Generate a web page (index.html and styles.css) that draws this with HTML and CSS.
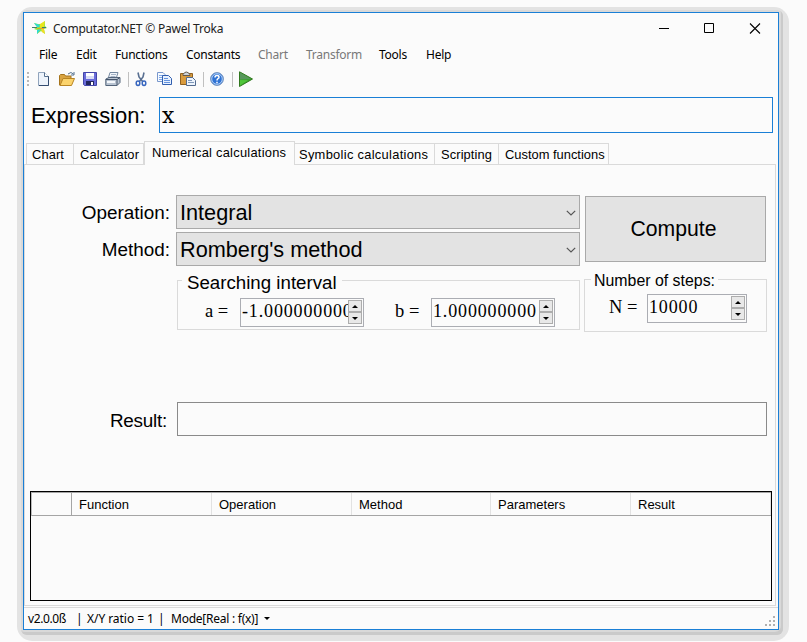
FILE: index.html
```html
<!DOCTYPE html>
<html lang="en">
<head>
<meta charset="utf-8">
<title>Computator.NET</title>
<link rel="stylesheet" href="styles.css">
</head>
<body>
<div class="window">
  <header class="titlebar">
    <svg class="app-icon" width="16" height="16" viewBox="0 0 16 16"><path d="M2 3 6 4 9 4 13 1 13 6 15 8 12 9 13 14 9 11 5 14 5 10 2 9 5 7Z" fill="#8be84a"/><path d="M8 4 13 1 12 7 8 8Z" fill="#e9e51c"/><path d="M2 3 8 5 7 7 5 7ZM5 10 9 9 5 14Z" fill="#2fd9d4"/><path d="M9 9 12 9 13 14 10 12Z" fill="#f1dc24"/><path d="M0 7.5h5M10 7.5h4" stroke="#407c70"/><path d="M5 8.5h7" stroke="#e9a425"/></svg>
    <h1 class="title">Computator.NET © Pawel Troka</h1>
    <svg class="caption" width="103" height="11" viewBox="0 0 103 11"><path d="M0 5.5h10M45.500.500h9v9h-9z" fill="none" stroke="#000"/><path d="M91 .5l10 10M101 .5l-10 10" stroke="#000" stroke-width="1.1"/></svg>
  </header>
  <nav class="menu">
    <span class="m-file">File</span><span class="m-edit">Edit</span><span class="m-func">Functions</span><span class="m-const">Constants</span><span class="m-chart off">Chart</span><span class="m-trans off">Transform</span><span class="m-tools">Tools</span><span>Help</span>
  </nav>
  <div class="toolbar">
    <svg class="grip" width="2" height="14" viewBox="0 0 2 14"><path d="M1 0v14" stroke="#b8b8b8" stroke-width="2" stroke-dasharray="2 2"/></svg>
    <svg class="ic" viewBox="0 0 16 16"><path d="M3.500 1.500h6l4 4v9h-10z" fill="#edf3fb" stroke="#91a4bc"/><path d="M13.500 5v9.500H4" fill="none" stroke="#344c70"/><path d="M9.500 1.500v4h4" fill="#fff" stroke="#56708f"/></svg>
    <svg class="ic" viewBox="0 0 16 16"><path d="M.5 14V4.500l1-1h4l1 1.500h5.500V14z" fill="#d9a441" stroke="#a6741c"/><path d="M1 14.500 4 7.500h11.500l-3 7z" fill="#fbd36c" stroke="#b98524"/><path d="M9 3q3-3 5.500 0M12 4h3V1" fill="none" stroke="#52708e"/></svg>
    <svg class="ic" viewBox="0 0 16 16"><path d="M1.500 1.500h13v13h-12l-1-1z" fill="#6a6cda" stroke="#4345a8"/><path d="M4 2h8v6H4z" fill="#d9ddf6"/><path d="M4 2h8v3H4z" fill="#fff"/><path d="M4 10h8v4H4z" fill="#23275e"/><path d="M9 11h2v3H9z" fill="#fff"/></svg>
    <svg class="ic" viewBox="0 0 16 16"><path d="M5 1.500h8L11 8H3z" fill="#f3f7fb" stroke="#7488a0"/><path d="M.8 8 4 6.500h11v5l-3 3H.8z" fill="#b9c4d2" stroke="#53647a"/><path d="M1 8.500h11v6M12 8.500l3-2" fill="none" stroke="#46556b"/><path d="M2 10h8v2H2z" fill="#f5f8fc"/><path d="M6 3.500h5M5.500 5.500h5" stroke="#a7b5c8"/></svg>
    <i class="sep s1"></i>
    <svg class="ic" viewBox="0 0 16 16"><path d="M5 1.500 6 6l4 5M11 1.500 10 6l-4 5" fill="none" stroke="#586f91" stroke-width="1.6"/><ellipse cx="5" cy="12.200" rx="1.800" ry="2.200" fill="none" stroke="#3766bf" stroke-width="1.500"/><ellipse cx="11" cy="12.200" rx="1.800" ry="2.200" fill="none" stroke="#3766bf" stroke-width="1.500"/></svg>
    <svg class="ic" viewBox="0 0 16 16"><path d="M1.500 1.500H7l2 2v7H1.500z" fill="#f5faff" stroke="#7897cd"/><path d="M3 4.500h4M3 6.500h4M3 8.500h4" stroke="#7fa7e8"/><path d="M6.500 4.500h6l3 3v6h-9z" fill="#e7f1ff" stroke="#315faf"/><path d="M8 7.500h4M8 9.500h6M8 11.500h6" stroke="#6594df"/></svg>
    <svg class="ic ic-paste" viewBox="0 0 16 16"><path d="M.5 2.500h12v11H.5z" fill="#d99b3d" stroke="#8f6122"/><path d="M3 3.500q3-5 7 0v1H3z" fill="#ccd3dc" stroke="#65594a"/><path d="M6.500 6.500h6l3 3v5h-9z" fill="#edf4fd" stroke="#536b8e"/><path d="M8 9.500h4M8 11.500h6" stroke="#7f98ba"/></svg>
    <i class="sep s2"></i>
    <svg class="ic" viewBox="0 0 16 16"><circle cx="8" cy="8" r="6.400" fill="#3073d4" stroke="#7794bd"/><circle cx="8" cy="8" r="5.300" fill="none" stroke="#c2dcfb" stroke-width=".9"/><path d="M6 6.500q0-2 2-2t2 1.700q0 1-1 1.500T8 9.500M8 10.700v1.500" fill="none" stroke="#fff" stroke-width="1.500"/></svg>
    <i class="sep s3"></i>
    <svg class="ic" viewBox="0 0 16 16"><path d="M1.500.800 14.500 8 1.500 15.500z" fill="#39a52c" stroke="#31771f"/><path d="M2 1.500 13 8 2 8.500z" fill="#58975c"/><path d="M2 14.500V9l8 .2z" fill="#4fc53a"/></svg>
  </div>
  <div class="expr">
    <span class="expr-label">Expression:</span>
    <div class="expr-box">x</div>
  </div>
  <div class="tabs">
    <span class="tab t1">Chart</span><span class="tab t2">Calculator</span><span class="tab t3 on">Numerical calculations</span><span class="tab t4">Symbolic calculations</span><span class="tab t5">Scripting</span><span class="tab t6">Custom functions</span>
  </div>
  <main class="panel">
    <section class="top">
      <div class="left">
        <div class="field"><span class="label l-op">Operation:</span><div class="combo"><span class="c1">Integral</span><svg width="10" height="6" viewBox="0 0 10 6"><path d="M.8.8 5 5 9.200.800" fill="none" stroke="#555" stroke-width="1.200"/></svg></div></div>
        <div class="field"><span class="label l-me">Method:</span><div class="combo"><span class="c2">Romberg's method</span><svg width="10" height="6" viewBox="0 0 10 6"><path d="M.8.8 5 5 9.200.800" fill="none" stroke="#555" stroke-width="1.200"/></svg></div></div>
        <div class="group interval">
          <span class="legend lg1">Searching interval</span>
          <div class="row">
            <span class="var v-a">a =</span>
            <div class="num"><span class="val">-1.0000000000</span><div class="spin"><i><b class="up"></b></i><i><b class="down"></b></i></div></div>
            <span class="var v-b">b =</span>
            <div class="num"><span class="val">1.000000000</span><div class="spin"><i><b class="up"></b></i><i><b class="down"></b></i></div></div>
          </div>
        </div>
      </div>
      <div class="right">
        <div class="compute">Compute</div>
        <div class="group steps">
          <span class="legend lg2">Number of steps:</span>
          <div class="row">
            <span class="var v-n">N =</span>
            <div class="num num-n"><span class="val">10000</span><div class="spin"><i><b class="up"></b></i><i><b class="down"></b></i></div></div>
          </div>
        </div>
      </div>
    </section>
    <div class="result"><span class="label l-re">Result:</span><div class="result-box"></div></div>
    <div class="table"><div class="thead"><span class="rowhead"></span><span>Function</span><span>Operation</span><span>Method</span><span>Parameters</span><span>Result</span></div></div>
  </main>
  <footer class="status">
    <span class="st1">v2.0.0ß</span><span class="bar">|</span><span class="st2">X/Y ratio = 1</span><span class="bar">|</span><span class="st3">Mode[Real : f(x)]</span><b class="down"></b>
    <svg class="size-grip" width="10" height="10" viewBox="0 0 10 10"><path d="M8 0h2v2H8zM4 4h2v2H4zM8 4h2v2H8zM0 8h2v2H0zM4 8h2v2H4zM8 8h2v2H8z" fill="#b0b0b0"/></svg>
  </footer>
</div>
</body>
</html>
```
FILE: styles.css
```css
* { box-sizing: border-box; }
body { margin: 0; width: 807px; height: 642px; overflow: hidden; padding: 12px 0 0 23px; background: #fbfbfb; color: #000; font-family: "Liberation Sans", Arial, sans-serif; }
span { white-space: nowrap; }
svg { display: block; flex: none; }
.window { position: relative; width: 756px; height: 618px; border: 1px solid #1a7fd6; background: #fbfbfb; display: flex; flex-direction: column; }
/* stepped drop shadow */
.window::before { content: ""; position: absolute; z-index: -1; left: -7px; top: -6px; right: -11px; bottom: -12px; border-radius: 15px; background: #e3e3e3; }
.window::after { content: ""; position: absolute; z-index: -1; left: -3px; top: -3px; right: -5px; bottom: -6px; border-radius: 6px; background: #d9d9d9; box-shadow: inset -2px -3px 0 #cacaca; }
.titlebar { height: 30px; display: flex; align-items: center; padding: 0 16px 0 8px; }
.title { margin: 1px 0 0 5px; font: 400 12px/16px "Noto Sans", sans-serif; letter-spacing: -.21px; color: #222; }
.caption { margin-left: auto; }
.menu { height: 24px; display: flex; padding-left: 15px; font: 12px/24px "Noto Sans", sans-serif; letter-spacing: -.25px; }
.off { color: #787878; }
.m-file { width: 37px; } .m-edit { width: 39px; } .m-func { width: 71px; } .m-const { width: 72px; } .m-chart { width: 48px; } .m-trans { width: 73px; } .m-tools { width: 47px; }
.toolbar { height: 24px; display: flex; align-items: center; padding-left: 3px; }
.grip { margin-right: 6px; }
.ic { width: 16px; height: 16px; margin-right: 7px; }
.grip + .ic { margin-right: 8px; }
.sep { width: 1px; height: 15px; background: #c0c0c0; }
.s1 { margin-right: 4px; }
.ic-paste { margin-left: 1px; }
.s2, .s3 { margin-right: 5px; }
.expr { height: 36px; margin-top: 6px; display: flex; padding-left: 7px; }
.expr-label { width: 128px; font-size: 22px; line-height: 37px; letter-spacing: -.05px; }
.expr-box { width: 614px; border: 1px solid #1a7fd6; font: 22px/35px "DejaVu Serif", serif; padding-left: 2px; }
.tabs { height: 23px; margin-top: 8px; padding-left: 2px; display: flex; align-items: flex-end; font-size: 12.9px; }
.tab { height: 21px; border: 1px solid #dadada; border-left: 0; border-bottom: 0; line-height: 21px; }
.t1 { width: 48px; border-left: 1px solid #dadada; padding-left: 5px; letter-spacing: .1px; }
.t2 { width: 70px; padding-left: 6px; letter-spacing: .1px; }
.t3 { width: 151px; padding-left: 7px; letter-spacing: .24px; }
.t4 { width: 140px; padding-left: 4px; letter-spacing: .29px; }
.t5 { width: 64px; padding-left: 6px; letter-spacing: .1px; }
.t6 { width: 110px; padding-left: 6px; }
.tab.on { height: 24px; border-left: 1px solid #dadada; background: #fbfbfb; margin-bottom: -1px; z-index: 1; line-height: 22px; }
.panel { width: 752px; height: 442px; border: 1px solid #dadada; padding: 30px 0 0 5px; }
.top { height: 207px; display: flex; gap: 4px; }
.left { width: 550px; display: flex; flex-direction: column; }
.field { height: 34px; margin-bottom: 3px; display: flex; justify-content: flex-end; }
.label { font-size: 18.9px; line-height: 36px; margin-right: 6px; }
.combo { width: 404px; border: 1px solid #a9a9a9; background: #e3e3e3; display: flex; align-items: center; justify-content: space-between; padding: 1px 3px 0 3px; font-size: 21.700px; }
.group { border: 1px solid #dadada; display: flex; flex-direction: column; }
.interval { width: 403px; height: 50px; margin: 11px 0 0 147px; }
.legend { align-self: flex-start; background: #fbfbfb; }
.lg1 { font-size: 18.700px; line-height: 20px; height: 20px; margin: -8px 0 0 4px; padding: 0 5px; }
.row { display: flex; }
.interval .row { margin-top: 5px; }
.var { font: 18.500px/27px "Liberation Serif", serif; }
.v-a { width: 35px; margin-left: 27px; }
.v-b { width: 36px; margin-left: 31px; }
.num { width: 124px; height: 29px; border: 1px solid #abadb3; display: flex; padding: 1px 1px 0 1px; }
.val { flex: 1; min-width: 0; overflow: hidden; font: 18px/23px "Liberation Serif", serif; letter-spacing: .85px; }
.spin { width: 14px; height: 24px; flex: none; display: flex; flex-direction: column; }
.spin i { height: 12px; border: 1px solid #adadad; background: #e8e8e8; display: flex; align-items: center; justify-content: center; }
.up, .down { width: 0; height: 0; border: 3px solid transparent; border-top: 0; border-bottom-color: #000; }
.down { border-bottom: 0; border-top: 3px solid #000; }
.compute { margin: 1px 0 0 1px; width: 181px; height: 66px; border: 1px solid #a9a9a9; background: #e3e3e3; font-size: 21.200px; line-height: 64px; text-align: center; padding-right: 4px; }
.steps { width: 183px; height: 53px; margin: 17px 0 0; }
.lg2 { font-size: 15.900px; line-height: 18px; height: 18px; margin: -8px 0 0 6px; padding: 0 3px; }
.steps .row { margin-top: 4px; }
.v-n { width: 38px; margin-left: 24px; }
.num-n { width: 100px; }
.result { height: 34px; display: flex; }
.l-re { width: 137px; margin-right: 10px; text-align: right; letter-spacing: -.25px; line-height: 37px; }
.result-box { width: 590px; border: 1px solid #8a8a8a; }
.table { width: 742px; height: 110px; margin-top: 55px; border: 1px solid #000; }
.thead { display: flex; height: 24px; border-bottom: 1px solid #a5a5a5; border-top: 1px solid #a5a5a5; border-left: 1px solid #bbb; font-size: 13px; line-height: 24px; }
.thead span { width: 140px; padding-left: 7px; border-right: 1px solid #e2e2e2; }
.thead span:nth-child(4) { width: 139px; }
.thead .rowhead { width: 40px; border-right-color: #a5a5a5; }
.status { height: 22px; margin-top: 1px; border-top: 1px solid #dadada; display: flex; align-items: center; padding-left: 4px; font: 12px/20px "Noto Sans", sans-serif; letter-spacing: -.4px; }
.st1 { width: 48px; }
.bar { width: 11px; }
.st2 { width: 71px; letter-spacing: -.05px; }
.st3 { margin-left: 2px; width: 93px; letter-spacing: -.25px; }
.size-grip { margin: 4px 3px 0 auto; }
```
